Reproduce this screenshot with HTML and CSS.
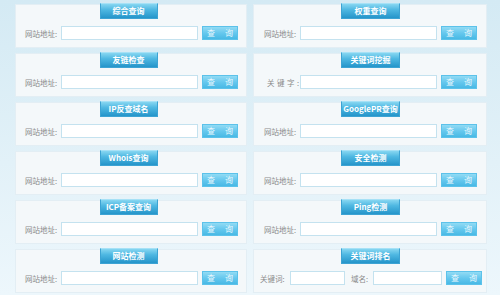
FILE: index.html
```html
<!DOCTYPE html>
<html lang="zh">
<head>
<meta charset="utf-8">
<title>站长工具</title>
<link rel="stylesheet" href="styles.css">
</head>
<body>
<div class="grid">
  <div class="card"><div class="tab">综合查询</div><div class="row"><span class="label">网站地址:</span><input class="field"><button class="btn">查 询</button></div></div>
  <div class="card wide"><div class="tab">权重查询</div><div class="row"><span class="label">网站地址:</span><input class="field"><button class="btn">查 询</button></div></div>

  <div class="card"><div class="tab">友链检查</div><div class="row"><span class="label">网站地址:</span><input class="field"><button class="btn">查 询</button></div></div>
  <div class="card wide"><div class="tab">关键词挖掘</div><div class="row"><span class="label spaced">关键字:</span><input class="field"><button class="btn">查 询</button></div></div>

  <div class="card"><div class="tab">IP反查域名</div><div class="row"><span class="label">网站地址:</span><input class="field"><button class="btn">查 询</button></div></div>
  <div class="card wide"><div class="tab">GooglePR查询</div><div class="row"><span class="label">网站地址:</span><input class="field"><button class="btn">查 询</button></div></div>

  <div class="card"><div class="tab">Whois查询</div><div class="row"><span class="label">网站地址:</span><input class="field"><button class="btn">查 询</button></div></div>
  <div class="card wide"><div class="tab">安全检测</div><div class="row"><span class="label">网站地址:</span><input class="field"><button class="btn">查 询</button></div></div>

  <div class="card"><div class="tab">ICP备案查询</div><div class="row"><span class="label">网站地址:</span><input class="field"><button class="btn">查 询</button></div></div>
  <div class="card wide"><div class="tab">Ping检测</div><div class="row"><span class="label">网站地址:</span><input class="field"><button class="btn">查 询</button></div></div>

  <div class="card"><div class="tab">网站检测</div><div class="row"><span class="label">网站地址:</span><input class="field"><button class="btn">查 询</button></div></div>
  <div class="card wide"><div class="tab">关键词排名</div><div class="row row-rank"><span class="label short">关键词:</span><input class="field kw"><span class="label domain">域名:</span><input class="field dm"><button class="btn">查 询</button></div></div>
</div>
</body>
</html>
```

FILE: styles.css
```css
html, body {
  margin: 0;
  padding: 0;
  height: 295px;
  overflow: hidden;
}
body {
  background: linear-gradient(180deg, #d4eaf4 0%, #e2f1f8 55%, #edf7fc 100%);
  font-family: "Noto Sans CJK SC", "Noto Sans", sans-serif;
}
.grid {
  display: grid;
  grid-template-columns: 232px 234px;
  grid-auto-rows: 44px;
  column-gap: 6px;
  row-gap: 5px;
  padding: 4px 0 0 15px;
}
.card {
  box-sizing: border-box;
  background: #f4f8fa;
  border: 1px solid #e3eef4;
  padding: 0 8px 0 9px;
  display: flex;
  flex-direction: column;
}
.card.wide {
  padding: 0 9px 0 10px;
}
.tab {
  align-self: center;
  margin: -2px 0 0 -6px;
  width: 58px;
  height: 16px;
  box-sizing: border-box;
  background: linear-gradient(180deg, #86d6f1 0%, #4fb8e2 40%, #2595ca 100%);
  border: 1px solid #3da3d3;
  border-top-color: #a6e1f6;
  color: #fff;
  font-size: 8px;
  font-weight: bold;
  line-height: 14px;
  text-align: center;
  white-space: nowrap;
}
.card.wide .tab {
  width: 59px;
  margin-left: 0;
}
.row {
  display: flex;
  align-items: center;
  margin-top: 7px;
  height: 14px;
}
.label {
  width: 36px;
  flex: none;
  font-size: 7.5px;
  color: #8a8a8a;
  white-space: nowrap;
}
.label.spaced {
  letter-spacing: 2.5px;
  padding-left: 3px;
  box-sizing: border-box;
}
.field {
  flex: 1;
  min-width: 0;
  height: 14px;
  box-sizing: border-box;
  margin: 0;
  padding: 0;
  border: 1px solid #c4e2ef;
  background: #fff;
  outline: none;
}
.btn {
  flex: none;
  width: 36px;
  height: 14px;
  margin: 0 0 0 4px;
  padding: 0;
  box-sizing: border-box;
  border: 1px solid #5cc2ea;
  background: linear-gradient(180deg, #92dbf4 0%, #66c8ee 50%, #48b9e5 100%);
  color: #eaf8fd;
  font-family: "Noto Sans CJK SC", "Noto Sans", sans-serif;
  font-size: 8px;
  letter-spacing: 4px;
  text-indent: 4px;
  line-height: 12px;
}
.row-rank {
  margin-left: -4px;
  margin-right: -5px;
}
.label.short {
  width: 30px;
}
.field.kw {
  flex: none;
  width: 55px;
}
.label.domain {
  width: 22px;
  margin-left: 6px;
}
.field.dm {
  flex: none;
  width: 69px;
}
```
